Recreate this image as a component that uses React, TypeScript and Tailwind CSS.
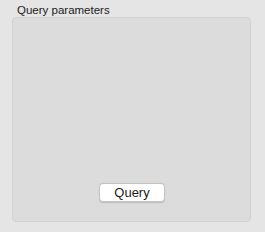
export default function App() {
  return (
    <div className="w-[265px] h-[232px] bg-[#e5e5e5] pt-[3px] pl-[12px] font-['Liberation_Sans',Arial,sans-serif]">
      <div className="pl-[5px] text-[11.5px] leading-[14px] text-[#1a1a1a]">Query parameters</div>
      <div className="mt-[0px] w-[239px] h-[205px] rounded-[4px] border border-[#d2d2d2] bg-[#dcdcdc] flex flex-col items-center justify-end pb-[19px]">
        <button className="ml-[1px] w-[66px] h-[19px] rounded-[4px] bg-white border border-[#c4c4c4] shadow-[0_0.5px_1px_rgba(0,0,0,0.15)] text-[13px] leading-[17px] text-[#1a1a1a]">
          Query
        </button>
      </div>
    </div>
  );
}
